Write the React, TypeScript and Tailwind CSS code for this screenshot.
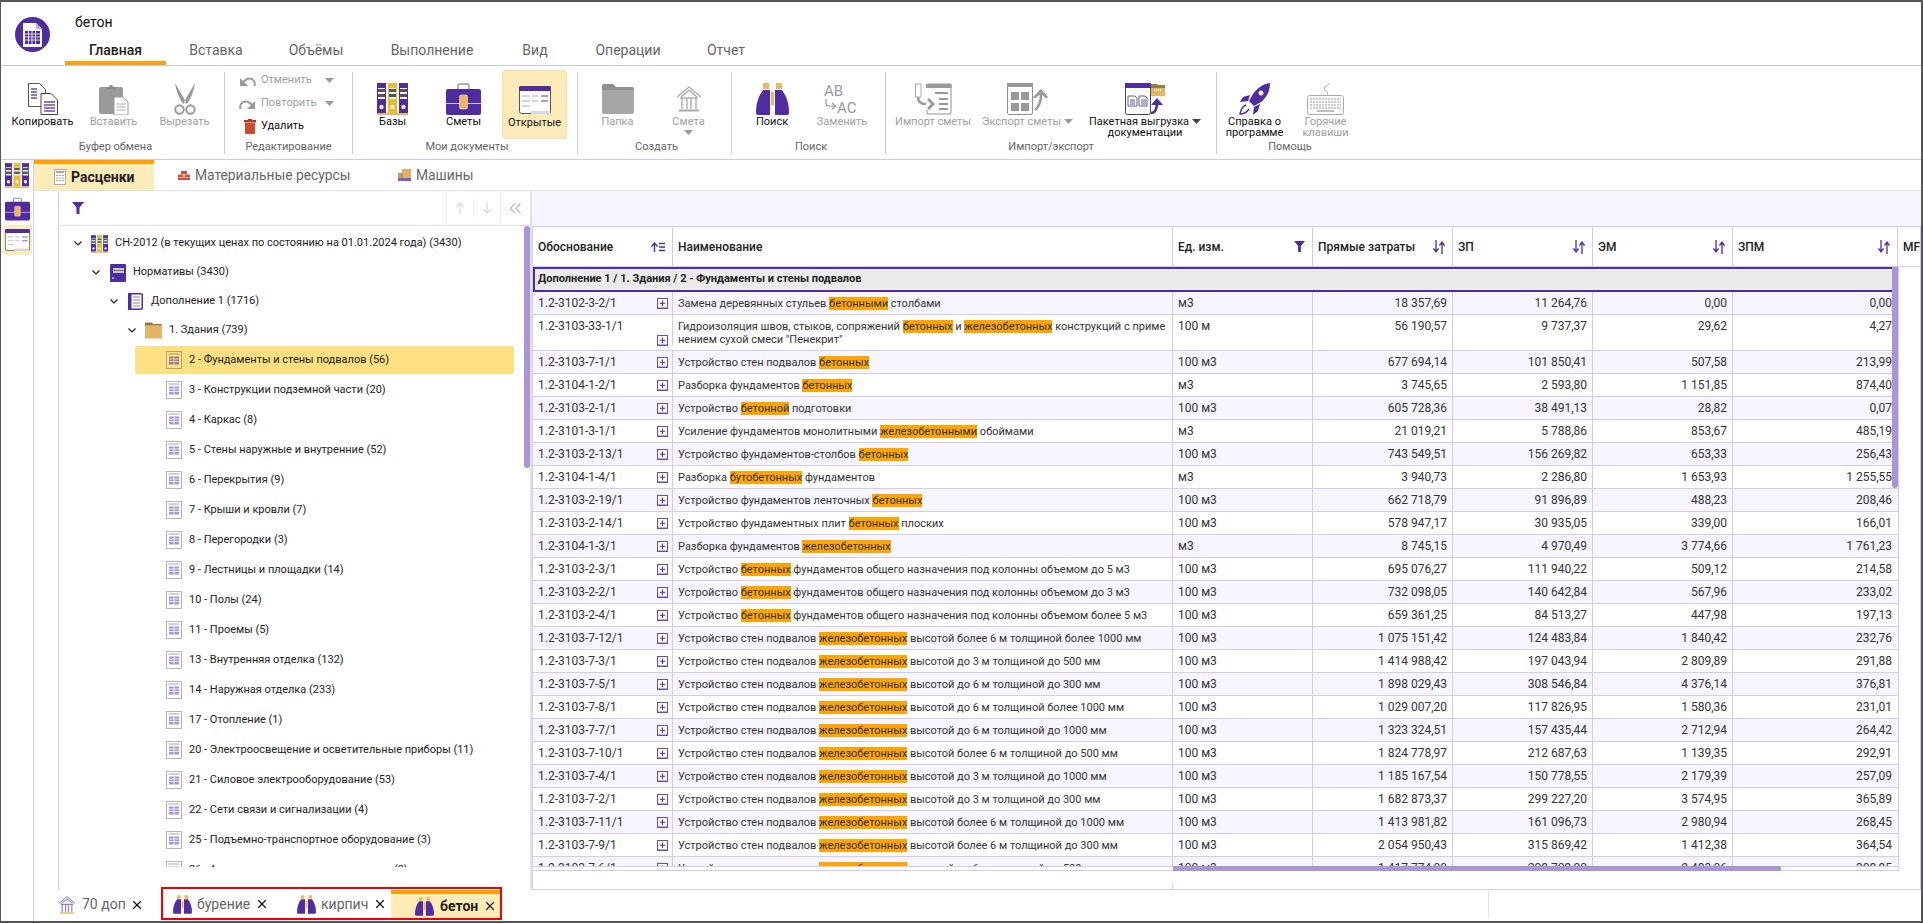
import {ReactNode} from "react";
import {X} from "lucide-react";

const PURPLE = "#4f2da0";

function Binders({className}: {className?: string}) {
    const col = (x: number, c: string) => (
        <g key={x}>
            <rect x={x} y="0" width="9" height="30" fill={c}/>
            <rect x={x + 1} y="5" width="7" height="11" fill="#f2f2f2"/>
            <rect x={x + 1} y="6" width="7" height="3" fill="#555"/>
            <rect x={x + 1} y="11" width="7" height="3" fill="#555"/>
            <circle cx={x + 4.5} cy="24" r="2.2" fill="#eee"/>
        </g>
    );
    return (
        <svg viewBox="0 0 31 32" className={className}>
            {col(0, PURPLE)}
            {col(11, "#e8bd2c")}
            {col(22, PURPLE)}
            <rect x="0" y="30" width="31" height="2" fill="#e6b566"/>
        </svg>
    );
}

function Briefcase({className}: {className?: string}) {
    return (
        <svg viewBox="0 0 35 32" className={className}>
            <path d="M12 6V2a1 1 0 0 1 1-1h9a1 1 0 0 1 1 1v4" fill="none" stroke="#666" strokeWidth="1"/>
            <rect x="0" y="6" width="35" height="26" rx="2" fill={PURPLE}/>
            <rect x="0" y="20" width="35" height="1" fill="#cfc5e8"/>
            <rect x="13.5" y="12" width="8" height="14" rx="1.5" fill="#f2b45c" stroke="#fff" strokeWidth="0.5"/>
        </svg>
    );
}

function OpenDocs({className}: {className?: string}) {
    return (
        <svg viewBox="0 0 32 28" className={className}>
            <rect x="0.5" y="0.5" width="31" height="27" rx="2" fill="#fff" stroke="#555"/>
            <rect x="0" y="0" width="32" height="5" rx="1.5" fill={PURPLE}/>
            <path d="M3 10h8M13 10h6M3 15h8M13 15h6M3 20h8" stroke="#c9c9c9" strokeWidth="1.5"/>
            <path d="M22 15h7" stroke="#8e78c8" strokeWidth="1.5"/>
            <path d="M22 10h7" stroke="#8e78c8" strokeWidth="1.5"/>
            <path d="M12 28v-3h19v3z" fill="#d9d9d9"/>
        </svg>
    );
}

function CopyIcon() {
    return (
        <svg viewBox="0 0 30 32" className="w-[30px] h-[32px]">
            <path d="M.5.5h11l6 6v17H.5z" fill="#fff" stroke="#555"/>
            <path d="M3 6h6M3 9h6M3 12h6M3 15h6" stroke="#6a4cb8" strokeWidth="1.4"/>
            <path d="M13 10.500h10l6.500 6.500v14.500H13z" fill="#fff" stroke="#444"/>
            <path d="M16 19h11M16 22h11M16 25h11M16 28h11" stroke="#6a4cb8" strokeWidth="1.4"/>
        </svg>
    );
}

function PasteIcon() {
    return (
        <svg viewBox="0 0 30 32" className="w-[30px] h-[32px]">
            <rect x="0" y="4" width="24" height="27" rx="2" fill="#9a9a9a"/>
            <path d="M7 6V4h3a2 2 0 0 1 4 0h3v2z" fill="#8a8a8a"/>
            <path d="M15 14h9l5 5v13H15z" fill="#fff" stroke="#999"/>
            <path d="M17.500 21h9M17.500 24h9M17.500 27h9" stroke="#aaa" strokeWidth="1.2"/>
        </svg>
    );
}

function ScissorsIcon() {
    return (
        <svg viewBox="0 0 24 32" className="w-[24px] h-[32px]">
            <path d="M2 0c1 8 4 15 8 21l3-2C9 12 5 5 2 0zM22 0c-1 8-4 15-8 21l-3-2C15 12 19 5 22 0z" fill="#9a9a9a"/>
            <circle cx="6.500" cy="26.500" r="4.200" fill="none" stroke="#9a9a9a" strokeWidth="2"/>
            <circle cx="17.500" cy="26.500" r="4.200" fill="none" stroke="#9a9a9a" strokeWidth="2"/>
        </svg>
    );
}

function UndoIcon({flip}: {flip?: boolean}) {
    return (
        <svg viewBox="0 0 17 13" className={flip ? "w-[17px] h-[13px] -scale-x-100" : "w-[17px] h-[13px]"}>
            <path d="M15.500 12c1-4-1-7.500-5-7.500-2.500 0-5 1.500-7.500 5" fill="none" stroke="#9a9a9a" strokeWidth="2"/>
            <path d="M1 4v8h8z" fill="#9a9a9a"/>
        </svg>
    );
}

function TrashIcon() {
    return (
        <svg viewBox="0 0 12 15" className="w-[12px] h-[15px]">
            <rect x="0" y="1" width="12" height="2.500" fill="#a83c24"/>
            <rect x="4" y="0" width="4" height="1.500" fill="#a83c24"/>
            <path d="M1 4h10v10a1 1 0 0 1-1 1H2a1 1 0 0 1-1-1z" fill="#cd4b2e"/>
        </svg>
    );
}

function FolderGray() {
    return (
        <svg viewBox="0 0 32 30" className="w-[32px] h-[30px]">
            <path d="M0 2a2 2 0 0 1 2-2h9l3 3h16a2 2 0 0 1 2 2v2H0z" fill="#8f8f8f"/>
            <path d="M0 6h32v22a2 2 0 0 1-2 2H2a2 2 0 0 1-2-2z" fill="#a6a6a6"/>
        </svg>
    );
}

function HouseIcon({className, color = "#a8a8a8", base = "#a8a8a8"}: { className?: string, color?: string, base?: string }) {
    return (
        <svg viewBox="0 0 26 26" className={className}>
            <path d="M1 11 13 1l12 10M5 11 13 4l8 7" fill="none" stroke={color} strokeWidth="1.300"/>
            <path d="M4 12h18" stroke={color} strokeWidth="1.300"/>
            <path d="M6 12v11M11 12v11M15 12v11M20 12v11" stroke={color} strokeWidth="1.300"/>
            <path d="M3 24.500h20" stroke={base} strokeWidth="2"/>
        </svg>
    );
}

function Binoculars({className}: {className?: string}) {
    return (
        <svg viewBox="0 0 33 32" className={className}>
            <rect x="7" y="0" width="6" height="6" fill="#f2b45c"/>
            <rect x="20" y="0" width="6" height="6" fill="#f2b45c"/>
            <path d="M7 7h7v25H2a2 2 0 0 1-2-2c0-9 2-16 7-23z" fill={PURPLE}/>
            <path d="M26 7h-7v25h12a2 2 0 0 0 2-2c0-9-2-16-7-23z" fill={PURPLE}/>
            <rect x="15" y="9" width="3" height="13" fill="#f2b45c"/>
        </svg>
    );
}

function ReplaceIcon() {
    return (
        <svg viewBox="0 0 36 32" className="w-[36px] h-[32px]">
            <text x="0" y="13" fontSize="15" fontFamily="Roboto" fill="#9a9a9a">AB</text>
            <text x="13" y="30" fontSize="15" fontFamily="Roboto" fill="#9a9a9a">AC</text>
            <path d="M2 16v4c0 2 1 3 3 3h6M8 20l3.500 3L8 26" fill="none" stroke="#9a9a9a" strokeWidth="1.200"/>
        </svg>
    );
}

function ImportIcon() {
    return (
        <svg viewBox="0 0 37 32" className="w-[37px] h-[32px]">
            <rect x="0.500" y="1" width="5.500" height="13" fill="#fff" stroke="#aaa"/>
            <path d="M12 3V2a1 1 0 0 1 1-1h22a1 1 0 0 1 1 1v28a1 1 0 0 1-1 1H13a1 1 0 0 1-1-1v-3" fill="#fff" stroke="#8f8f8f"/>
            <rect x="11" y="1" width="25.500" height="4" fill="#999"/>
            <path d="M20 10h13M24 16h9M24 21h9M24 26h9" stroke="#999" strokeWidth="2"/>
            <path d="M3 14c0 5 3 7 8 7" fill="none" stroke="#999" strokeWidth="2.500"/>
            <path d="M14 15l6 6-6 6-2-2 4-4-4-4z" fill="#999"/>
        </svg>
    );
}

function ExportIcon() {
    return (
        <svg viewBox="0 0 41 32" className="w-[41px] h-[32px]">
            <rect x="0.500" y="0.500" width="25" height="31" rx="1.500" fill="#fff" stroke="#8f8f8f"/>
            <rect x="0" y="0" width="26" height="4" fill="#999"/>
            <rect x="4" y="9" width="8" height="8" fill="#999"/>
            <rect x="14" y="9" width="8" height="8" fill="#999"/>
            <rect x="4" y="20" width="8" height="8" fill="#999"/>
            <rect x="14" y="20" width="8" height="8" fill="#999"/>
            <path d="M28 27c4-3 6-8 6-16" fill="none" stroke="#999" strokeWidth="2.500"/>
            <path d="M26 14l8-8 7 8-2 1.500-5-5-6 5z" fill="#999"/>
        </svg>
    );
}

function PackageIcon() {
    return (
        <svg viewBox="0 0 40 32" className="w-[40px] h-[32px]">
            <rect x="0.500" y="0.500" width="25" height="31" rx="2" fill="#fff" stroke="#444"/>
            <rect x="0" y="0" width="26" height="5" fill={PURPLE}/>
            <path d="M3 13h7l2 2v8H3zM14 13h6l2 2v8h-8z" fill="#fff" stroke="#444" strokeWidth="0.800"/>
            <path d="M5 17h5M5 19h5M5 21h5M16 17h5M16 19h5M16 21h5" stroke="#6a4cb8" strokeWidth="1"/>
            <path d="M26 1h6l1 1h7v11H26z" fill="#e5b566"/>
            <path d="M26 1h6l1 1h7v3H26z" fill="#9a7b35"/>
            <path d="M29 7h8" stroke="#fff" strokeDasharray="1 1" strokeWidth="2"/>
            <path d="M26 30c4 0 6-3 6-11" fill="none" stroke={PURPLE} strokeWidth="2.500"/>
            <path d="M26 22l6-7 6 7z" fill={PURPLE}/>
        </svg>
    );
}

function RocketIcon() {
    return (
        <svg viewBox="0 0 32 32" className="w-[32px] h-[32px]">
            <path d="M31 0c-7 1-13 5-17 11l-4 7 5 5 7-4c5-4 9-10 9-19z" fill={PURPLE}/>
            <path d="M11 12 4 14l-3 5 8-1zM21 21l-2 7-5 4 1-8z" fill={PURPLE}/>
            <circle cx="22" cy="10" r="2.500" fill="#fff"/>
            <path d="M7 22c-3 1-5 4-6 9 4 0 7-2 9-5" fill="none" stroke={PURPLE} strokeWidth="1.400"/>
        </svg>
    );
}

function KeyboardIcon() {
    return (
        <svg viewBox="0 0 37 32" className="w-[37px] h-[32px]">
            <path d="M22 0c2 2-8 4-4 7 3 2 3 3 2 5" fill="none" stroke="#aaa"/>
            <rect x="0.500" y="12.500" width="36" height="19" rx="2" fill="#fff" stroke="#aaa"/>
            <path d="M3 16h31M3 19h31M3 22h31M3 25h31" stroke="#bbb" strokeDasharray="2 1" strokeWidth="1.500"/>
            <path d="M10 28h17" stroke="#aaa" strokeWidth="1.500"/>
        </svg>
    );
}

function BookIcon() {
    return (
        <svg viewBox="0 0 16 18" className="w-[16px] h-[18px]">
            <rect width="16" height="18" rx="1" fill={PURPLE}/>
            <rect x="3" y="4" width="11" height="5" fill="#c8c8c8"/>
            <path d="M3 6.500h11" stroke="#777"/>
            <path d="M2 14h2" stroke="#fff"/>
        </svg>
    );
}

function JournalIcon() {
    return (
        <svg viewBox="0 0 15 17" className="w-[15px] h-[17px]">
            <rect x="0.750" y="0.750" width="13.500" height="15.500" rx="1.500" fill="#fff" stroke={PURPLE} strokeWidth="1.500"/>
            <rect x="0" y="0" width="3.500" height="17" fill={PURPLE}/>
            <path d="M5 4h7M5 7h7M5 10h7M5 13h7" stroke="#888" strokeWidth="1.200"/>
        </svg>
    );
}

function FolderTan() {
    return (
        <svg viewBox="0 0 18 17" className="w-[18px] h-[17px]">
            <path d="M0 0h7l1.500 1.500H18V4H0z" fill="#9a7b35"/>
            <rect x="0" y="3" width="18" height="14" fill="#e5b566"/>
        </svg>
    );
}

function TableDoc({selected}: {selected?: boolean}) {
    const line = selected ? "#b9a25c" : "#b5b5b5";
    return (
        <svg viewBox="0 0 16 18" className="w-[16px] h-[18px] shrink-0">
            <rect x="0.500" y="0.500" width="15" height="17" fill={selected ? "#fde28a" : "#fff"} stroke={line}/>
            <path d="M2.500 3h11" stroke={line} strokeWidth="1.200"/>
            <rect x="3" y="5.500" width="10" height="8" fill={selected ? "#9a7ca0" : "#a795d6"}/>
            <path d="M3 8h10M3 10.500h10M8 5.500v8" stroke={selected ? "#fde28a" : "#fff"} strokeWidth="0.800"/>
        </svg>
    );
}

function PlusBox() {
    return (
        <svg viewBox="0 0 11 11" className="w-[11px] h-[11px] shrink-0">
            <rect x="0.500" y="0.500" width="10" height="9.500" fill="#fff" stroke="#6a4cb8"/>
            <path d="M0 10.500h11" stroke="#6a4cb8"/>
            <path d="M5.500 2.500v5.500M2.750 5.250h5.500" stroke={PURPLE}/>
        </svg>
    );
}

function Funnel({className}: {className?: string}) {
    return (
        <svg viewBox="0 0 12 12" className={className}>
            <path d="M0 0h12L7.500 5.500V12h-3V5.500z" fill={PURPLE}/>
        </svg>
    );
}

function SortIcon() {
    return (
        <svg viewBox="0 0 12 14" className="w-[12px] h-[14px]">
            <path d="M3 0v11M.5 8.500 3 12l2.500-3.500" fill="none" stroke={PURPLE} strokeWidth="1.300"/>
            <path d="M9 14V3M6.500 5.500 9 2l2.500 3.500" fill="none" stroke={PURPLE} strokeWidth="1.300"/>
        </svg>
    );
}

function Chevron() {
    return (
        <svg viewBox="0 0 8 5" className="w-[8px] h-[5px]">
            <path d="M.5.500 4 4l3.500-3.500" fill="none" stroke="#222" strokeWidth="1.200"/>
        </svg>
    );
}

function Caret({color = "#9a9a9a"}: { color?: string }) {
    return (
        <svg viewBox="0 0 9 5" className="w-[9px] h-[5px] shrink-0">
            <path d="M0 0h9L4.500 5z" fill={color}/>
        </svg>
    );
}

function RibbonBtn({icon, label, w = 71, off, active, caret}: {
    icon: ReactNode, label: ReactNode, w?: number, off?: boolean, active?: boolean, caret?: boolean
}) {
    return (
        <div style={{width: w}} className="shrink-0 flex justify-center">
            <div
                className={`flex flex-col items-center pt-[12px] h-[69px] -mt-[2px] w-full rounded-[3px] ${active ? "bg-[#fdebb8] border border-[#f3e0ae] !w-[65px]" : ""}`}>
                <div className="h-[34px] flex items-center justify-center">{icon}</div>
                <div className={`text-[11px] leading-[11px] text-center whitespace-nowrap ${off ? "text-[#a0a0a0]" : "text-[#111]"}`}>
                    {label}
                </div>
                {caret && <div className="mt-[3px]"><Caret/></div>}
            </div>
        </div>
    );
}

function RibbonGroup({title, width, last, pl = 0, children}: {
    title: string, width: number, last?: boolean, pl?: number, children: ReactNode
}) {
    return (
        <div style={{width, paddingLeft: pl}} className={`shrink-0 h-[82px] mt-[6px] flex flex-col ${last ? "" : "border-r border-[#cfc8e2]"}`}>
            <div className="h-[68px] flex">{children}</div>
            <div className="h-[14px] text-[11px] leading-[14px] text-center text-[#666]">{title}</div>
        </div>
    );
}

function EditRow({icon, label, off, caret}: { icon: ReactNode, label: string, off?: boolean, caret?: boolean }) {
    return (
        <div className="h-[23px] flex items-center">
            <div className="w-[36px] flex justify-end pr-[5px]">{icon}</div>
            <div className={`text-[11px] w-[64px] ${off ? "text-[#a0a0a0]" : "text-[#111]"}`}>{label}</div>
            {caret && <Caret/>}
        </div>
    );
}

function Ribbon() {
    return (
        <div className="h-[94px] flex border-b border-[#cfc8e2] shrink-0">
            <RibbonGroup title="Буфер обмена" width={224} pl={6}>
                <RibbonBtn icon={<CopyIcon/>} label="Копировать"/>
                <RibbonBtn icon={<PasteIcon/>} label="Вставить" off/>
                <RibbonBtn icon={<ScissorsIcon/>} label="Вырезать" off/>
            </RibbonGroup>
            <RibbonGroup title="Редактирование" width={128}>
                <div className="-mt-[3px]">
                    <EditRow icon={<UndoIcon/>} label="Отменить" off caret/>
                    <EditRow icon={<UndoIcon flip/>} label="Повторить" off caret/>
                    <EditRow icon={<TrashIcon/>} label="Удалить"/>
                </div>
            </RibbonGroup>
            <RibbonGroup title="Мои документы" width={225} pl={4}>
                <RibbonBtn icon={<Binders className="w-[31px] h-[32px]"/>} label="Базы"/>
                <RibbonBtn icon={<Briefcase className="w-[35px] h-[32px]"/>} label="Сметы"/>
                <RibbonBtn icon={<OpenDocs className="w-[32px] h-[28px]"/>} label="Открытые" active/>
            </RibbonGroup>
            <RibbonGroup title="Создать" width={154} pl={4}>
                <RibbonBtn icon={<FolderGray/>} label="Папка" off/>
                <RibbonBtn icon={<HouseIcon className="w-[26px] h-[26px]"/>} label="Смета" off caret/>
            </RibbonGroup>
            <RibbonGroup title="Поиск" width={154} pl={5}>
                <RibbonBtn icon={<Binoculars className="w-[33px] h-[32px]"/>} label="Поиск" w={70}/>
                <RibbonBtn icon={<ReplaceIcon/>} label="Заменить" off w={70}/>
            </RibbonGroup>
            <RibbonGroup title="Импорт/экспорт" width={331}>
                <RibbonBtn icon={<ImportIcon/>} label="Импорт сметы" off w={94}/>
                <RibbonBtn icon={<ExportIcon/>} label={<span className="flex items-center gap-[3px]">Экспорт сметы <Caret/></span>} off w={95}/>
                <RibbonBtn
                    icon={<PackageIcon/>}
                    label={<><span className="flex items-center gap-[3px]">Пакетная выгрузка <Caret color="#444"/></span>документации</>}
                    w={140}
                />
            </RibbonGroup>
            <RibbonGroup title="Помощь" width={146} last>
                <RibbonBtn icon={<RocketIcon/>} label={<>Справка о<br/>программе</>} w={75}/>
                <RibbonBtn icon={<KeyboardIcon/>} label={<>Горячие<br/>клавиши</>} off w={67}/>
            </RibbonGroup>
        </div>
    );
}

const mainTabs: [string, number][] = [
    ["Главная", 101], ["Вставка", 100], ["Объёмы", 100], ["Выполнение", 132], ["Вид", 74], ["Операции", 112], ["Отчет", 84],
];

function Header() {
    return (
        <div className="h-[64px] flex border-b border-[#cfc8e2] shrink-0">
            <div className="w-[64px] shrink-0 pl-[14px] pt-[15px]">
                <svg viewBox="0 0 35 35" className="w-[35px] h-[35px]">
                    <circle cx="17.500" cy="17.500" r="17.500" fill={PURPLE}/>
                    <path d="M8 6h13l6 6v18H8z" fill="#fff"/>
                    <path d="M21 6l6 6h-6z" fill="#b9a9e0"/>
                    <rect x="10" y="14" width="15" height="13" fill={PURPLE}/>
                    <path d="M10 17h15M10 20h15M10 23h15M13.500 14v13M17 14v13M20.500 14v13" stroke="#fff" strokeWidth="0.800"/>
                </svg>
            </div>
            <div className="flex flex-col">
                <div className="pl-[10px] h-[38px] pt-[12px] text-[14px] leading-[16px] text-[#111]">бетон</div>
                <div className="flex h-[25px]">
                    {mainTabs.map(([t, w], i) => (
                        <div key={t} style={{width: w}}
                             className={`text-center text-[14px] leading-[20px] ${i === 0 ? "font-medium text-[#222] border-b-4 border-[#ffa000]" : "text-[#666]"}`}>
                            {t}
                        </div>
                    ))}
                </div>
            </div>
        </div>
    );
}

function SubTabs() {
    return (
        <div className="h-[31px] flex border-b border-[#e2e2e2] shrink-0 text-[13.8px] text-[#666]">
            <div className="w-[120px] h-[30px] bg-[#fdebb8] border-t-4 border-[#ffa000] flex items-center pl-[20px] gap-[5px]">
                <svg viewBox="0 0 12 16" className="w-[12px] h-[16px]">
                    <rect x="0.500" y="0.500" width="11" height="15" fill="#fff" stroke="#aaa"/>
                    <path d="M2 3h8" stroke="#888" strokeWidth="1.500"/>
                    <path d="M2 6.500h8M2 9h8M2 11.500h8" stroke="#aaa" strokeDasharray="2 1"/>
                </svg>
                <span className="font-bold text-[14px] text-[#222] leading-[18px]">Расценки</span>
            </div>
            <div className="flex items-center pl-[24px] w-[222px] gap-[5px]">
                <svg viewBox="0 0 12 9" className="w-[12px] h-[9px]">
                    <path d="M3 0h6v3H3zM0 3.500h5.500v2.500H0zM6.500 3.500H12v2.500H6.500zM0 6.500h12V9H0z" fill="#c9553f"/>
                </svg>
                <span>Материальные ресурсы</span>
            </div>
            <div className="flex items-center pl-[22px] gap-[5px]">
                <svg viewBox="0 0 13 13" className="w-[13px] h-[13px]">
                    <rect x="4" y="0" width="9" height="9" fill="#e0b070"/>
                    <rect x="0" y="4" width="5" height="5" fill="#c89858"/>
                    <rect x="0" y="9" width="13" height="3" fill="#7c5fc0"/>
                </svg>
                <span>Машины</span>
            </div>
        </div>
    );
}

type TreeNode = { label: string, level: number, icon: ReactNode };

const branches: TreeNode[] = [
    {label: "СН-2012 (в текущих ценах по состоянию на 01.01.2024 года) (3430)", level: 0, icon: <Binders className="w-[17px] h-[18px]"/>},
    {label: "Нормативы (3430)", level: 1, icon: <BookIcon/>},
    {label: "Дополнение 1 (1716)", level: 2, icon: <JournalIcon/>},
    {label: "1. Здания (739)", level: 3, icon: <FolderTan/>},
];

const leaves = [
    "2 - Фундаменты и стены подвалов (56)", "3 - Конструкции подземной части (20)", "4 - Каркас (8)",
    "5 - Стены наружные и внутренние (52)", "6 - Перекрытия (9)", "7 - Крыши и кровли (7)", "8 - Перегородки (3)",
    "9 - Лестницы и площадки (14)", "10 - Полы (24)", "11 - Проемы (5)", "13 - Внутренняя отделка (132)",
    "14 - Наружная отделка (233)", "17 - Отопление (1)", "20 - Электроосвещение и осветительные приборы (11)",
    "21 - Силовое электрооборудование (53)", "22 - Сети связи и сигнализации (4)",
    "25 - Подъемно-транспортное оборудование (3)", "26 - Автоматика и средства измерения (2)",
];

function TreePanel() {
    return (
        <div className="w-[473px] shrink-0 border-r-2 border-[#e2e2e2] flex flex-col relative">
            <div className="h-[35px] border-b border-[#e4dff2] flex items-center shrink-0">
                <div className="w-[387px] pl-[13px]"><Funnel className="w-[12px] h-[12px]"/></div>
                <div className="w-[27px] h-full border-l border-[#eeeeee] flex items-center justify-center">
                    <svg viewBox="0 0 10 12" className="w-[10px] h-[12px]">
                        <path d="M5 12V1M1 5l4-4 4 4" fill="none" stroke="#e0e0e0" strokeWidth="1.500"/>
                    </svg>
                </div>
                <div className="w-[27px] h-[20px] border-l border-[#eeeeee] flex items-center justify-center">
                    <svg viewBox="0 0 10 12" className="w-[10px] h-[12px]">
                        <path d="M5 0v11M1 7l4 4 4-4" fill="none" stroke="#e0e0e0" strokeWidth="1.500"/>
                    </svg>
                </div>
                <div className="flex-1 h-full border-l border-[#eeeeee] flex items-center pl-[9px]">
                    <svg viewBox="0 0 11 11" className="w-[11px] h-[11px]">
                        <path d="M5 .5l-4.500 5 4.500 5M10.500 .5l-4.500 5 4.500 5" fill="none" stroke="#8e78c8" strokeWidth="0.900"/>
                    </svg>
                </div>
            </div>
            <div className="h-[641px] overflow-hidden pt-[3px] text-[11px] text-[#222] shrink-0">
                {branches.map(n => (
                    <div key={n.label} style={{paddingLeft: 15 + n.level * 18}} className="h-[29px] flex items-center whitespace-nowrap">
                        <div className="w-[8px] mr-[9px] flex"><Chevron/></div>
                        <div className="w-[17px] mr-[7px] flex justify-center shrink-0">{n.icon}</div>
                        <span>{n.label}</span>
                    </div>
                ))}
                {leaves.map((l, i) => (
                    <div key={l} className="h-[30px] pl-[76px] pr-[16px] flex items-center">
                        <div className={`flex-1 h-[28px] flex items-center pl-[31px] gap-[7px] rounded-[2px] ${i === 0 ? "bg-[#fedf82]" : ""}`}>
                            <TableDoc selected={i === 0}/>
                            <span>{l}</span>
                        </div>
                    </div>
                ))}
            </div>
            <div className="absolute left-[465px] top-[35px] w-[6px] h-[242px] rounded-[3px] bg-[#a896d6]"/>
        </div>
    );
}

type Row = [string, string, string, string, string, string, string];

const rows: Row[] = [
    ["1.2-3102-3-2/1", "Замена деревянных стульев [бетонными] столбами", "м3", "18 357,69", "11 264,76", "0,00", "0,00"],
    ["1.2-3103-33-1/1", "Гидроизоляция швов, стыков, сопряжений [бетонных] и [железобетонных] конструкций с приме\nнением сухой смеси \"Пенекрит\"", "100 м", "56 190,57", "9 737,37", "29,62", "4,27"],
    ["1.2-3103-7-1/1", "Устройство стен подвалов [бетонных]", "100 м3", "677 694,14", "101 850,41", "507,58", "213,99"],
    ["1.2-3104-1-2/1", "Разборка фундаментов [бетонных]", "м3", "3 745,65", "2 593,80", "1 151,85", "874,40"],
    ["1.2-3103-2-1/1", "Устройство [бетонной] подготовки", "100 м3", "605 728,36", "38 491,13", "28,82", "0,07"],
    ["1.2-3101-3-1/1", "Усиление фундаментов монолитными [железобетонными] обоймами", "м3", "21 019,21", "5 788,86", "853,67", "485,19"],
    ["1.2-3103-2-13/1", "Устройство фундаментов-столбов [бетонных]", "100 м3", "743 549,51", "156 269,82", "653,33", "256,43"],
    ["1.2-3104-1-4/1", "Разборка [бутобетонных] фундаментов", "м3", "3 940,73", "2 286,80", "1 653,93", "1 255,55"],
    ["1.2-3103-2-19/1", "Устройство фундаментов ленточных [бетонных]", "100 м3", "662 718,79", "91 896,89", "488,23", "208,46"],
    ["1.2-3103-2-14/1", "Устройство фундаментных плит [бетонных] плоских", "100 м3", "578 947,17", "30 935,05", "339,00", "166,01"],
    ["1.2-3104-1-3/1", "Разборка фундаментов [железобетонных]", "м3", "8 745,15", "4 970,49", "3 774,66", "1 761,23"],
    ["1.2-3103-2-3/1", "Устройство [бетонных] фундаментов общего назначения под колонны объемом до 5 м3", "100 м3", "695 076,27", "111 940,22", "509,12", "214,58"],
    ["1.2-3103-2-2/1", "Устройство [бетонных] фундаментов общего назначения под колонны объемом до 3 м3", "100 м3", "732 098,05", "140 642,84", "567,96", "233,02"],
    ["1.2-3103-2-4/1", "Устройство [бетонных] фундаментов общего назначения под колонны объемом более 5 м3", "100 м3", "659 361,25", "84 513,27", "447,98", "197,13"],
    ["1.2-3103-7-12/1", "Устройство стен подвалов [железобетонных] высотой более 6 м толщиной более 1000 мм", "100 м3", "1 075 151,42", "124 483,84", "1 840,42", "232,76"],
    ["1.2-3103-7-3/1", "Устройство стен подвалов [железобетонных] высотой до 3 м толщиной до 500 мм", "100 м3", "1 414 988,42", "197 043,94", "2 809,89", "291,88"],
    ["1.2-3103-7-5/1", "Устройство стен подвалов [железобетонных] высотой до 6 м толщиной до 300 мм", "100 м3", "1 898 029,43", "308 546,84", "4 376,14", "376,81"],
    ["1.2-3103-7-8/1", "Устройство стен подвалов [железобетонных] высотой до 6 м толщиной более 1000 мм", "100 м3", "1 029 007,20", "117 826,95", "1 580,36", "231,01"],
    ["1.2-3103-7-7/1", "Устройство стен подвалов [железобетонных] высотой до 6 м толщиной до 1000 мм", "100 м3", "1 323 324,51", "157 435,44", "2 712,94", "264,42"],
    ["1.2-3103-7-10/1", "Устройство стен подвалов [железобетонных] высотой более 6 м толщиной до 500 мм", "100 м3", "1 824 778,97", "212 687,63", "1 139,35", "292,91"],
    ["1.2-3103-7-4/1", "Устройство стен подвалов [железобетонных] высотой до 3 м толщиной до 1000 мм", "100 м3", "1 185 167,54", "150 778,55", "2 179,39", "257,09"],
    ["1.2-3103-7-2/1", "Устройство стен подвалов [железобетонных] высотой до 3 м толщиной до 300 мм", "100 м3", "1 682 873,37", "299 227,20", "3 574,95", "365,89"],
    ["1.2-3103-7-11/1", "Устройство стен подвалов [железобетонных] высотой более 6 м толщиной до 1000 мм", "100 м3", "1 413 981,82", "161 096,73", "2 980,94", "268,45"],
    ["1.2-3103-7-9/1", "Устройство стен подвалов [железобетонных] высотой более 6 м толщиной до 300 мм", "100 м3", "2 054 950,43", "315 869,42", "1 412,38", "364,54"],
    ["1.2-3103-7-6/1", "Устройство стен подвалов [железобетонных] высотой до 6 м толщиной до 500 мм", "100 м3", "1 417 774,00", "208 709,00", "2 483,06", "308,95"],
];

function Highlighted({text}: { text: string }) {
    return (
        <>
            {text.split(/(\[[^\]]+\])/).map((p, i) => p.startsWith("[")
                ? <span key={i} className="bg-[#ffa500]">{p.slice(1, -1)}</span>
                : <span key={i}>{p}</span>)}
        </>
    );
}

const cellLine = "border-r border-[#d5cbee] shrink-0";

function TableRow({row, odd}: { row: Row, odd: boolean }) {
    const tall = row[1].includes("\n");
    const [line1, line2] = row[1].split("\n");
    return (
        <div className={`flex border-b border-[#d5cbee] text-[12px] leading-[13px] text-[#333] ${tall ? "h-[36px] pt-[5px]" : "h-[23px] items-center"} ${odd ? "bg-[#f7f5fd]" : "bg-white"}`}>
            <div className={`w-[140px] h-full ${tall ? "-mt-[5px] pt-[5px] h-[35px]" : "flex items-center"} pl-[5px] pr-[4px] relative ${cellLine}`}>
                <div className={tall ? "" : "flex-1"}>{row[0]}</div>
                {tall
                    ? <div className="flex justify-end mt-[2px]"><PlusBox/></div>
                    : <PlusBox/>}
            </div>
            <div className={`w-[500px] pl-[5px] text-[11px] whitespace-nowrap overflow-hidden ${tall ? "-mt-[5px] pt-[5px] h-[35px]" : "h-full flex items-center"} ${cellLine}`}>
                <div>
                    <Highlighted text={line1}/>
                    {line2 && <br/>}
                    {line2}
                </div>
            </div>
            <div className={`w-[140px] pl-[5px] ${tall ? "-mt-[5px] pt-[5px] h-[35px]" : "h-full flex items-center"} ${cellLine}`}>{row[2]}</div>
            {[row[3], row[4], row[5]].map((v, i) => (
                <div key={i} className={`w-[140px] pr-[5px] text-right ${tall ? "-mt-[5px] pt-[5px] h-[35px]" : "h-full flex items-center justify-end"} ${cellLine}`}>{v}</div>
            ))}
            <div className={`w-[159px] shrink-0 text-right ${tall ? "" : "h-full flex items-center justify-end"}`}>{row[6]}</div>
        </div>
    );
}

function HeadCell({w, label, icon, last}: { w: number, label: string, icon?: ReactNode, last?: boolean }) {
    return (
        <div style={{width: w}} className={`h-full flex items-center justify-between pl-[5px] pr-[7px] shrink-0 overflow-hidden ${last ? "" : "border-r border-[#d5cbee]"}`}>
            <span className="font-medium text-[12px] text-[#222] whitespace-nowrap">{label}</span>
            {icon}
        </div>
    );
}

function DataTable() {
    return (
        <div className="flex-1 flex flex-col bg-[#f7f5fd] min-w-0">
            <div className="h-[35px] shrink-0"/>
            <div className="h-[664px] bg-white border border-[#d5cbee] flex flex-col overflow-hidden">
                <div className="h-[40px] flex border-b border-[#d5cbee] shrink-0">
                    <HeadCell w={140} label="Обоснование" icon={
                        <svg viewBox="0 0 14 10" className="w-[14px] h-[10px]">
                            <path d="M3.500 10V2M.5 4.500 3.500 1l3 3.500" fill="none" stroke={PURPLE} strokeWidth="1.400"/>
                            <path d="M8 1.500h6M8 5h6M8 8.500h6" stroke={PURPLE} strokeWidth="1.300"/>
                        </svg>
                    }/>
                    <HeadCell w={500} label="Наименование"/>
                    <HeadCell w={140} label="Ед. изм." icon={<Funnel className="w-[11px] h-[11px]"/>}/>
                    <HeadCell w={140} label="Прямые затраты" icon={<SortIcon/>}/>
                    <HeadCell w={140} label="ЗП" icon={<SortIcon/>}/>
                    <HeadCell w={140} label="ЭМ" icon={<SortIcon/>}/>
                    <HeadCell w={165} label="ЗПМ" icon={<SortIcon/>}/>
                    <HeadCell w={22} label="MF" last/>
                </div>
                <div className="w-[1366px] h-[604px] border-r border-b border-[#d5cbee] shrink-0 relative">
                    <div className="h-[599px] overflow-hidden">
                        <div className="h-[25px] bg-[#ebebeb] border-2 border-[#4f2da0] flex items-center pl-[3px] text-[11px] font-bold text-[#222]">
                            Дополнение 1 / 1. Здания / 2 - Фундаменты и стены подвалов
                        </div>
                        {rows.map((r, i) => <TableRow key={r[0]} row={r} odd={i % 2 === 0}/>)}
                    </div>
                    <div className="h-[5px] border-t border-[#d5cbee] pl-[640px]">
                        <div className="w-[608px] h-[5px] -mt-[1px] bg-[#a896d6] rounded-r-[2px]"/>
                    </div>
                    <div className="absolute right-0 top-0 w-[6px] h-[221px] rounded-b-[3px] bg-[#a896d6]"/>
                </div>
                <div className="flex-1 pl-[639px] flex items-end">
                    <div className="w-px h-[6px] bg-[#d5cbee]"/>
                </div>
            </div>
        </div>
    );
}

function BottomTab({label, w}: { label: string, w: number }) {
    return (
        <div style={{width: w}} className="h-full flex items-center shrink-0">
            <Binoculars className="w-[19px] h-[19px]"/>
            <span className="text-[14px] ml-[5px] text-[#666]">{label}</span>
            <X size={14} strokeWidth={2} color="#111" className="ml-[5px]"/>
        </div>
    );
}

function BottomBar() {
    return (
        <div className="h-[31px] flex items-start shrink-0">
            <div className="w-[127px] h-[29px] shrink-0 pl-[24px] flex items-center">
                <HouseIcon className="w-[18px] h-[18px]" color="#7c5fc0" base="#e5b566"/>
                <span className="text-[14px] text-[#666] ml-[6px]">70 доп</span>
                <X size={14} strokeWidth={2} color="#111" className="ml-[4px]"/>
            </div>
            <div className="h-[33px] -mt-[3px] pt-[1px] w-[341px] shrink-0 border-2 border-[#f00000] flex pl-[10px]">
                <BottomTab w={124} label="бурение"/>
                <BottomTab w={94} label="кирпич"/>
                <div className="flex-1 h-full bg-[#fdebb8] border-t-4 border-[#ffa000] flex items-center pl-[24px]">
                    <Binoculars className="w-[19px] h-[19px]"/>
                    <span className="text-[14px] font-bold text-[#222] ml-[6px]">бетон</span>
                    <X size={14} strokeWidth={2} color="#222" className="ml-[5px]"/>
                </div>
            </div>
            <div className="ml-[986px] w-px h-[28px] bg-[#e2e2e2]"/>
        </div>
    );
}

export default function App() {
    return (
        <div className="w-[1923px] h-[923px] border-t-2 border-l border-r-2 border-b-2 border-[#555] flex flex-col overflow-hidden bg-white font-['Roboto',sans-serif]">
            <Header/>
            <Ribbon/>
            <div className="flex flex-1 min-h-0">
                <div className="w-[33px] shrink-0 border-r border-[#d5cbee] flex flex-col items-center pt-[1px]">
                    <Binders className="w-[24px] h-[29px]"/>
                    <Briefcase className="w-[25px] h-[24px] mt-[7px]"/>
                    <div className="mt-[4px] w-[29px] h-[30px] bg-[#fdebb8] rounded-[3px] flex items-center justify-center">
                        <OpenDocs className="w-[25px] h-[22px]"/>
                    </div>
                </div>
                <div className="flex-1 flex flex-col min-w-0">
                    <SubTabs/>
                    <div className="flex h-[699px] shrink-0">
                        <div className="w-[25px] shrink-0 border-r border-[#d5cbee]"/>
                        <TreePanel/>
                        <DataTable/>
                    </div>
                    <BottomBar/>
                </div>
            </div>
        </div>
    );
}
